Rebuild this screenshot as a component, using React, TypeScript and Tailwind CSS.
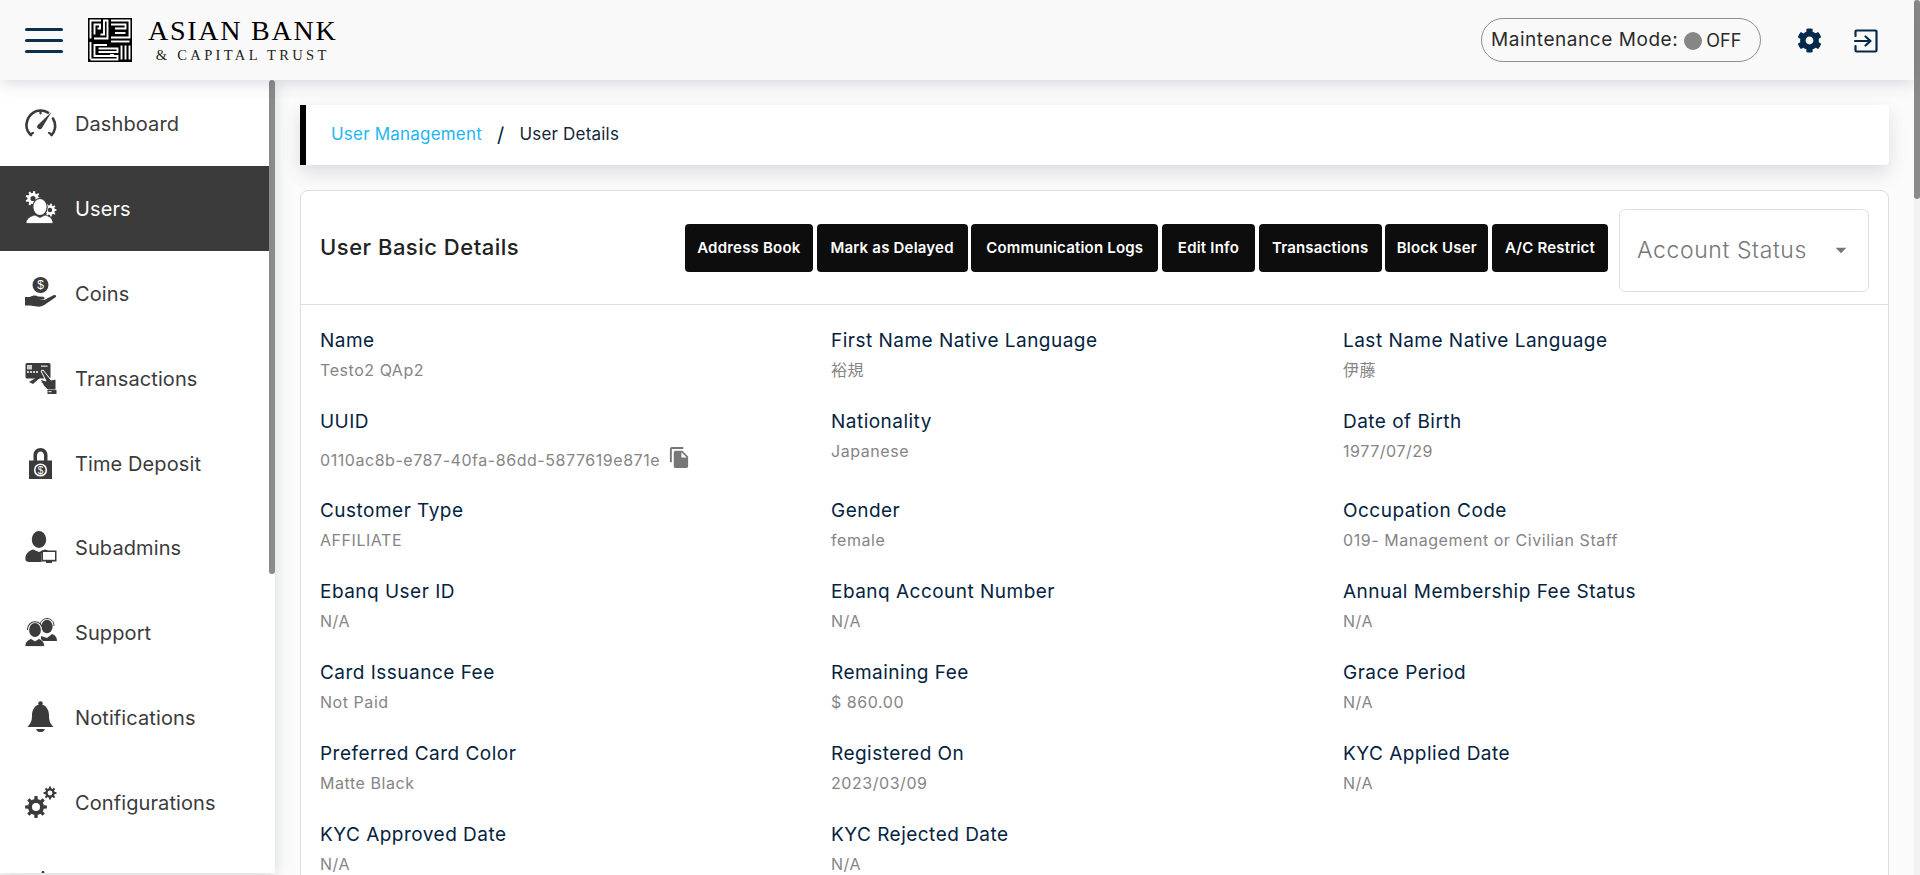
import React from "react";
import { FaCog } from "react-icons/fa";
import { MdFileCopy, MdArrowDropDown } from "react-icons/md";

function gear(cx: number, cy: number, R: number, r: number, hole: number, teeth: number) {
  let d = "";
  const step = (Math.PI * 2) / teeth;
  for (let i = 0; i < teeth; i++) {
    const a = i * step;
    const pts = [
      [r, a - step * 0.5],
      [r, a - step * 0.28],
      [R, a - step * 0.18],
      [R, a + step * 0.18],
      [r, a + step * 0.28],
    ];
    pts.forEach(([rad, ang], j) => {
      d += `${i === 0 && j === 0 ? "M" : "L"}${(cx + rad * Math.cos(ang)).toFixed(2)} ${(cy + rad * Math.sin(ang)).toFixed(2)}`;
    });
  }
  d += `ZM${cx - hole} ${cy}a${hole} ${hole} 0 1 0 ${hole * 2} 0a${hole} ${hole} 0 1 0 ${-hole * 2} 0Z`;
  return d;
}

const DARK = "#3b3b3b";

const IconDashboard = () => (
  <svg width="32" height="32" viewBox="0 0 32 32" fill="none" stroke={DARK} strokeWidth="2.6" strokeLinecap="round">
    <path d="M6 28 C2.5 25 1 21 1.6 16.5 C2.6 9 8.5 3.5 15.5 3.5 C18.5 3.5 21 4.3 23 5.6" />
    <path d="M28 11.5 C30 15 30.5 19 29.8 22 C29.2 24.5 28 26.5 26.5 28" />
    <path d="M5.5 27.5l2.5-1.6M26.5 27.5l-2.5-1.6M15.5 3.5v3" strokeWidth="2.2" />
    <path d="M26.5 5 L17 21 A2.6 2.6 0 0 1 12.6 18.2 Z" fill={DARK} stroke="none" />
  </svg>
);

const IconUsers = () => (
  <svg width="32" height="34" viewBox="0 0 32 34" fill="#fff">
    <path fillRule="evenodd" d={gear(8, 7.5, 7.5, 5.6, 2.6, 9)} />
    <path fillRule="evenodd" d={gear(25, 19, 6.5, 4.8, 2.2, 9)} />
    <ellipse cx="15" cy="16" rx="7.2" ry="8.6" stroke="#3b3b3b" strokeWidth="1.2" />
    <path d="M1 32.5 C1 27 6 25 10 24 L15 26.5 L20 24 C24 25 28 27 28 32.5 Z" stroke="#3b3b3b" strokeWidth="0.8" />
  </svg>
);

const IconCoins = () => (
  <svg width="32" height="32" viewBox="0 0 32 32">
    <circle cx="15.5" cy="8" r="8" fill={DARK} />
    <text x="15.5" y="12.4" textAnchor="middle" fontSize="12" fontFamily="Liberation Sans" fill="#fff">$</text>
    <path d="M0 20 H5 C8 18 11 18 13 19.5 L18 19.7 C20 20 20 22 18.5 22.6 L13.5 23 L19 23 L29 18 C31 17.5 32 19 30.5 20.2 L20 27.5 C18 29 15 30 12 29.5 L5 28.5 H0 Z" fill={DARK} />
  </svg>
);

const IconTransactions = () => (
  <svg width="32" height="32" viewBox="0 0 32 32">
    <rect x="0.5" y="1" width="25" height="15.5" rx="1.5" fill={DARK} />
    <rect x="2" y="3" width="5" height="4.5" fill="#fff" opacity=".75" />
    <rect x="16" y="3.5" width="6.5" height="1.4" fill="#fff" opacity=".75" />
    <path d="M2 10h2M5 10h2M8 10h2M11 10h2" stroke="#fff" strokeWidth="1.3" />
    <path d="M4 20 L14 14 L16 15 L8 22 Z" fill={DARK} />
    <path d="M16 9 L18 8 L26 18 L31 17 V28 H23 C20 26 17 22 15 17 L21 19 Z" fill={DARK} stroke="#fff" strokeWidth="1" />
    <rect x="22.5" y="28" width="9" height="4" fill={DARK} />
    <rect x="23.5" y="29.2" width="3" height="1" fill="#fff" />
  </svg>
);

const IconLock = () => (
  <svg width="32" height="32" viewBox="0 0 32 32">
    <path d="M8.5 14 V8 C8.5 4 11.5 1 15.5 1 C19.5 1 22.5 4 22.5 8 V14 H19 V8.5 C19 6.2 17.5 4.5 15.5 4.5 C13.5 4.5 12 6.2 12 8.5 V14 Z" fill={DARK} />
    <rect x="4" y="13.5" width="23" height="18.5" fill={DARK} />
    <circle cx="15.5" cy="23" r="6.6" fill="#fff" />
    <circle cx="15.5" cy="23" r="5" fill={DARK} />
    <text x="15.5" y="26.6" textAnchor="middle" fontSize="10" fontFamily="Liberation Sans" fill="#fff">$</text>
  </svg>
);

const IconSubadmin = () => (
  <svg width="32" height="32" viewBox="0 0 32 32">
    <ellipse cx="14" cy="8.5" rx="7.2" ry="8.5" fill={DARK} />
    <path d="M0.5 29 C0 24 2 20.5 8 18.5 L14 21 L20 18.5 C23 19.5 25 21 26 22 H16.5 V31 H5 C3 31 1 30.5 .5 29 Z" fill={DARK} />
    <rect x="16.5" y="19.5" width="15" height="11" fill="#3b3b3b" />
    <rect x="18" y="21" width="12" height="7.8" fill="#fff" />
    <rect x="21" y="30" width="6" height="2" fill={DARK} />
  </svg>
);

const IconSupport = () => (
  <svg width="32" height="30" viewBox="0 0 32 30">
    <ellipse cx="22" cy="9.5" rx="5.6" ry="6.8" fill={DARK} />
    <path d="M15 9 C15 -1 29 -1 29 9" fill="none" stroke={DARK} strokeWidth="1" />
    <path d="M16 19 L22 21 L27 17 C30 18 32 20 32 24 H16 Z" fill={DARK} />
    <ellipse cx="10" cy="13" rx="6.6" ry="7.8" fill={DARK} stroke="#fff" strokeWidth="1.4" />
    <path d="M2.4 13 C2.4 2 17.6 2 17.6 13" fill="none" stroke={DARK} strokeWidth="1.2" />
    <path d="M0 29.5 C0 24.5 3 23 6 21.5 L10 24 L14 21.5 C17 23 19.5 24.5 19.5 29.5 Z" fill={DARK} stroke="#fff" strokeWidth=".8" />
  </svg>
);

const IconBell = () => (
  <svg width="32" height="32" viewBox="0 0 32 32">
    <circle cx="15.5" cy="2.5" r="2.3" fill={DARK} />
    <path d="M2.5 26 C6.5 22 7 18.5 7 14 C7 8.5 10.5 3.5 15.5 3.5 C20.5 3.5 24 8.5 24 14 C24 18.5 24.5 22 28.5 26 Z" fill={DARK} />
    <path d="M11 28 H20 C19 30.5 17.5 31 15.5 31 C13.5 31 12 30.5 11 28 Z" fill={DARK} />
  </svg>
);

const IconConfig = () => (
  <svg width="32" height="32" viewBox="0 0 32 32" fill={DARK}>
    <path fillRule="evenodd" d={gear(11, 21, 11, 8, 4, 8)} />
    <path fillRule="evenodd" d={gear(25, 7, 6.5, 4.8, 2.4, 8)} />
  </svg>
);

const IconNext = () => (
  <svg width="32" height="6" viewBox="0 0 32 6" fill={DARK}>
    <path d="M4 2 L6 2 L6.5 4 H3.5 Z" />
    <path d="M17 0 L19 0 L20 4 H16 Z" />
  </svg>
);

const Logo = () => (
  <svg width="44" height="44" viewBox="0 0 44 44">
    <rect width="44" height="44" fill="#000" />
    <g fill="none" stroke="#fff" strokeWidth="1.9">
      <path d="M2.5 20.5V2.5H13" />
      <path d="M6.5 16.5V6.5H12V10.5H9.5" />
      <path d="M6 20.5H19.5V2.5H16V16.5H12.5" />
      <path d="M23 2.5H41.5V19.5H23" />
      <path d="M23 6.5H37.5V10.5H27" />
      <path d="M27 15H37.5" />
      <path d="M2.5 41.5H29.5V38H6.5V27H19" />
      <path d="M2.5 24V41" />
      <path d="M10.5 30.5H29.5V34H10.5" />
      <path d="M23 23.5H41.5" />
      <path d="M33.5 27.5V41.5M37.5 27.5V41.5M41.5 27.5V41.5" />
    </g>
    <rect x="22" y="36" width="4" height="3" fill="#fff" />
  </svg>
);

const nav: [string, React.ReactNode][] = [
  ["Dashboard", <IconDashboard />],
  ["Users", <IconUsers />],
  ["Coins", <IconCoins />],
  ["Transactions", <IconTransactions />],
  ["Time Deposit", <IconLock />],
  ["Subadmins", <IconSubadmin />],
  ["Support", <IconSupport />],
  ["Notifications", <IconBell />],
  ["Configurations", <IconConfig />],
];

const buttons: [string, string][] = [
  ["Address Book", "w-[128px]"],
  ["Mark as Delayed", "w-[151px]"],
  ["Communication Logs", "w-[187px]"],
  ["Edit Info", "w-[93px]"],
  ["Transactions", "w-[123px]"],
  ["Block User", "w-[103px]"],
  ["A/C Restrict", "w-[116px]"],
];

const fields: [string, string][] = [
  ["Name", "Testo2 QAp2"],
  ["First Name Native Language", "裕規"],
  ["Last Name Native Language", "伊藤"],
  ["UUID", "0110ac8b-e787-40fa-86dd-5877619e871e"],
  ["Nationality", "Japanese"],
  ["Date of Birth", "1977/07/29"],
  ["Customer Type", "AFFILIATE"],
  ["Gender", "female"],
  ["Occupation Code", "019- Management or Civilian Staff"],
  ["Ebanq User ID", "N/A"],
  ["Ebanq Account Number", "N/A"],
  ["Annual Membership Fee Status", "N/A"],
  ["Card Issuance Fee", "Not Paid"],
  ["Remaining Fee", "$ 860.00"],
  ["Grace Period", "N/A"],
  ["Preferred Card Color", "Matte Black"],
  ["Registered On", "2023/03/09"],
  ["KYC Applied Date", "N/A"],
  ["KYC Approved Date", "N/A"],
  ["KYC Rejected Date", "N/A"],
];

export default function App() {
  return (
    <div className="flex h-[875px] w-full overflow-hidden bg-[#fbfbfb] font-['Inter','Noto_Sans_CJK_JP',sans-serif]">
      <div className="flex min-w-0 flex-1 flex-col">
        <header className="relative z-20 flex h-[80px] shrink-0 items-center bg-[#f9f9f9] pl-[25px] pr-[35px] shadow-[0_2px_16px_rgba(60,70,90,0.22)]">
          <div className="flex w-[38px] flex-col gap-[8px]">
            <span className="h-[3px] rounded-full bg-[#0b2f4f]" />
            <span className="h-[3px] rounded-full bg-[#0b2f4f]" />
            <span className="h-[3px] rounded-full bg-[#0b2f4f]" />
          </div>
          <div className="ml-[25px]"><Logo /></div>
          <div className="ml-[16px] flex flex-col items-center font-['Liberation_Serif',serif] text-black">
            <span className="text-[28px] leading-[26px] tracking-[1.75px]">ASIAN BANK</span>
            <span className="mt-[3px] text-[14.5px] leading-[16px] tracking-[3.35px] text-[#222]">&amp; CAPITAL TRUST</span>
          </div>
          <div className="ml-auto flex items-center">
            <div className="flex h-[44px] w-[280px] items-center rounded-full border border-[#8f8f8f] pl-[9px] pt-[1px] text-[19px]">
              <span className="tracking-[0.55px] text-[#2b2b2b]">Maintenance Mode:</span>
              <span className="ml-[6px] h-[18px] w-[18px] rounded-full bg-[#868686]" />
              <span className="ml-[4px] text-[18px] text-[#2b2b2b]">OFF</span>
            </div>
            <FaCog className="ml-[36px] mt-[1px] text-[#05294a]" size={25} />
            <svg className="ml-[31px] mt-[1px]" width="26" height="26" viewBox="0 0 26 26" fill="none" stroke="#05294a" strokeWidth="2.2" strokeLinecap="round" strokeLinejoin="round">
              <path d="M2.5 8V3.5a1 1 0 0 1 1-1H22.5a1 1 0 0 1 1 1V22.5a1 1 0 0 1-1 1H3.5a1 1 0 0 1-1-1V18" />
              <path d="M2 13H17M12.5 8.5L17.5 13L12.5 17.5" />
            </svg>
          </div>
        </header>
        <div className="flex min-h-0 flex-1">
          <aside className="relative z-10 flex h-[793px] w-[275px] shrink-0 bg-white shadow-[0_2px_14px_rgba(60,70,90,0.2)]">
            <nav className="flex w-[269px] flex-col overflow-hidden pt-[1px]">
              {nav.map(([label, icon]) => {
                const active = label === "Users";
                return (
                  <div key={label} className={`flex h-[84.8px] shrink-0 items-center pl-[25px] ${active ? "bg-[#3b3b3b] text-white" : "text-[#3b3b3b]"}`}>
                    <span className="flex w-[50px] shrink-0 items-center">{icon}</span>
                    <span className="mt-[2px] text-[20px] tracking-[0.1px]">{label}</span>
                  </div>
                );
              })}
              <div className="flex h-[84.8px] shrink-0 pl-[25px] pt-[27px]"><IconNext /></div>
            </nav>
            <div className="w-[6px] bg-white">
              <div className="h-[494px] rounded-[3px] bg-[#8a8a8a]" />
            </div>
          </aside>
          <main className="min-w-0 flex-1 overflow-hidden px-[25px] pt-[25px]">
            <div className="flex h-[60px] items-center rounded-r-[4px] border-l-[6px] border-black bg-white pl-[25px] text-[17px] tracking-[0.2px] shadow-[0_8px_18px_rgba(60,70,90,0.16)]">
              <span className="text-[#1fb5f5]">User Management</span>
              <span className="mx-[15px] text-[20px] text-[#05233f]">/</span>
              <span className="text-[#16263a]">User Details</span>
            </div>
            <section className="mt-[25px] rounded-[8px] border border-[#dedede] bg-white">
              <div className="flex h-[114px] items-center border-b border-[#dedede] px-[19px]">
                <h2 className="text-[22px] font-medium tracking-[0.5px] text-[#222]">User Basic Details</h2>
                <div className="ml-auto flex items-center gap-[3.7px]">
                  {buttons.map(([b, w]) => (
                    <button key={b} className={`flex h-[48px] items-center justify-center rounded-[4px] bg-[#0d0d0d] pt-[1px] text-[15px] font-semibold tracking-[0.2px] text-white ${w}`}>{b}</button>
                  ))}
                </div>
                <div className="ml-[11px] mt-[5px] flex h-[83px] w-[250px] items-center justify-between rounded-[6px] border border-[#dedede] pl-[17px] pr-[14px] text-[#777]">
                  <span className="text-[23px] font-light tracking-[0.6px]">Account Status</span>
                  <MdArrowDropDown size={26} className="text-[#777]" />
                </div>
              </div>
              <div className="grid grid-cols-[511px_512px_1fr] pl-[19px] pt-[21px]">
                {fields.map(([k, v]) => (
                  <div key={k} className={k === "UUID" ? "h-[89px]" : "h-[81px]"}>
                    <div className="text-[19px] leading-[30px] tracking-[0.48px] text-[#05233f]">{k}</div>
                    <div className={`flex items-center text-[16px] leading-[28px] tracking-[0.55px] text-[#858585] ${k === "UUID" ? "mt-[9px]" : ""}`}>
                      <span>{v}</span>
                      {k === "UUID" && <MdFileCopy className="ml-[8px] -translate-y-[3px] text-[#777]" size={23} />}
                    </div>
                  </div>
                ))}
              </div>
            </section>
          </main>
        </div>
      </div>
      <div className="w-[6px] shrink-0 bg-[#f1f1f1]">
        <div className="h-[199px] rounded-[3px] bg-[#8a8a8a]" />
      </div>
    </div>
  );
}
